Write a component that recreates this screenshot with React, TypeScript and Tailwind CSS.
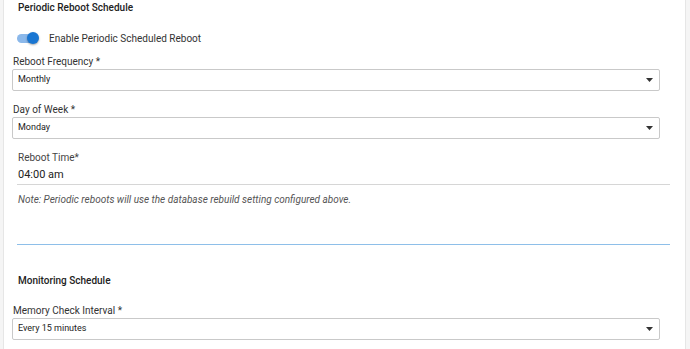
import React from "react";

function Caret() {
  return (
    <svg width="7" height="4" viewBox="0 0 7 4" className="shrink-0">
      <path d="M0 0 L7 0 L3.5 4 Z" fill="#333" />
    </svg>
  );
}

function SelectField({ label, value, className = "" }: { label: string; value: string; className?: string }) {
  return (
    <div className={"flex flex-col " + className}>
      <div className="h-[14px] text-[10px] leading-[14px] pl-[1px] text-[#333]">{label}</div>
      <div className="w-[648px] h-[22px] border border-[#c9c9c9] rounded-[2px] flex items-center justify-between pl-[5px] pr-[6px] text-[9px] text-[#222] bg-white">
        <span>{value}</span>
        <Caret />
      </div>
    </div>
  );
}

export default function App() {
  return (
    <div className="w-[690px] h-[349px] bg-[#f5f5f5] overflow-hidden pl-[3px] pr-[4px] font-['Roboto',sans-serif]">
      <div className="h-full bg-white border-x border-[#e6e6e6] flex flex-col pl-[8px]">
        <div className="ml-[6px] h-[16px] leading-[16px] text-[10px] font-medium text-[#222]">Periodic Reboot Schedule</div>

        <div className="mt-[12px] h-[20px] ml-[5px] flex items-center">
          <div className="relative w-[22px] h-[12px] flex items-center">
            <div className="w-[20px] h-[9px] rounded-full bg-[#8bb8ea]" />
            <div className="absolute left-[10px] top-[0px] w-[12px] h-[12px] rounded-full bg-[#1976d2] shadow-[0_1px_2px_rgba(0,0,0,0.35)]" />
          </div>
          <span className="ml-[10px] text-[10px] text-[#333]">Enable Periodic Scheduled Reboot</span>
        </div>

        <SelectField label="Reboot Frequency *" value="Monthly" className="mt-[7px]" />
        <SelectField label="Day of Week *" value="Monday" className="mt-[12px]" />

        <div className="mt-[12px] ml-[5px] w-[653px] flex flex-col">
          <div className="h-[14px] leading-[14px] text-[10px] pl-[1px] text-[#444]">Reboot Time*</div>
          <div className="mt-[2px] h-[18px] border-b border-[#d6d6d6] pl-[1px] text-[11px] leading-[16px] text-[#222]">04:00 am</div>
          <div className="mt-[8px] h-[14px] leading-[14px] pl-[1px] text-[10px] italic text-[#555]">
            Note: Periodic reboots will use the database rebuild setting configured above.
          </div>
          <div className="mt-[37px] h-px bg-[#8ebfe9]" />
        </div>

        <div className="mt-[28px] ml-[6px] h-[16px] leading-[16px] text-[10px] font-medium text-[#222]">Monitoring Schedule</div>
        <SelectField label="Memory Check Interval *" value="Every 15 minutes" className="mt-[15px]" />
      </div>
    </div>
  );
}
